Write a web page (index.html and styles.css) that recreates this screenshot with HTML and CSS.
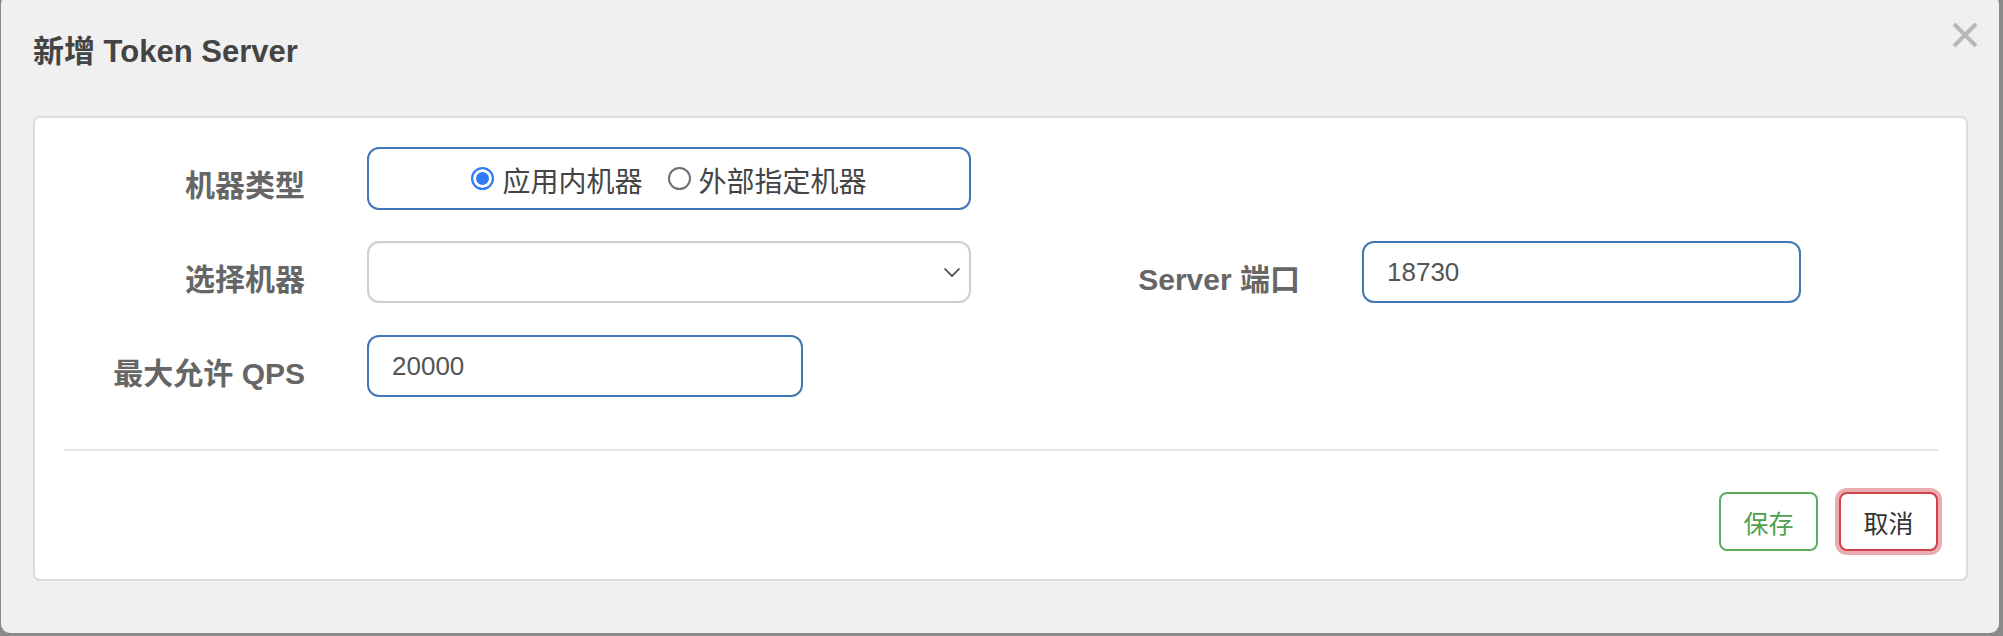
FILE: index.html
```html
<!DOCTYPE html>
<html lang="zh-CN">
<head>
<meta charset="utf-8">
<title>新增 Token Server</title>
<link rel="stylesheet" href="styles.css">
</head>
<body>
<div class="modal">
  <div class="modal-header">
    <h4 class="modal-title">新增 Token Server</h4>
    <span class="close" aria-label="关闭">
      <svg width="26" height="26" viewBox="0 0 26 26"><path d="M2 2 L24 24 M24 2 L2 24" stroke="#b8b8b8" stroke-width="4" stroke-linecap="butt" fill="none"/></svg>
    </span>
  </div>
  <div class="panel">
    <div class="form-grid">
      <label class="control-label">机器类型</label>
      <div class="radio-box">
        <span class="radio checked"></span><span class="radio-text">应用内机器</span>
        <span class="radio"></span><span class="radio-text">外部指定机器</span>
      </div>
      <span></span><span></span>

      <label class="control-label">选择机器</label>
      <div class="select">
        <svg class="chevron" width="18" height="11" viewBox="0 0 18 11"><path d="M1.5 1.5 L9 9 L16.5 1.5" stroke="#444" stroke-width="1.7" fill="none"/></svg>
      </div>
      <label class="control-label">Server 端口</label>
      <div class="input focus">18730</div>

      <label class="control-label">最大允许 QPS</label>
      <div class="input focus narrow">20000</div>
      <span></span><span></span>
    </div>
    <hr class="divider">
    <div class="actions">
      <button class="btn btn-save">保存</button>
      <button class="btn btn-cancel">取消</button>
    </div>
  </div>
</div>
</body>
</html>
```

FILE: styles.css
```css
html, body {
  margin: 0;
  padding: 0;
}
body {
  background: #8a8a8a;
  width: 2003px;
  height: 636px;
  overflow: hidden;
  font-family: "Liberation Sans", "Noto Sans CJK SC", sans-serif;
}
.modal {
  box-sizing: border-box;
  margin: -5px 4px 0 1px;
  width: 1998px;
  height: 638px;
  background: #f0f0f0;
  border-radius: 9px;
  padding: 27px 31px 0 32px;
}
.modal-header {
  display: flex;
  justify-content: space-between;
  align-items: flex-start;
  height: 94px;
}
.modal-title {
  margin: 12px 0 0 0;
  font-size: 31px;
  line-height: 36px;
  font-weight: bold;
  color: #444;
}
.close {
  display: block;
  width: 26px;
  height: 26px;
  margin-right: -10px;
}
.close svg { display: block; }
.panel {
  box-sizing: border-box;
  height: 465px;
  background: #fff;
  border: 2px solid #dcdcdc;
  border-radius: 7px;
  padding: 29px 28px 28px 29px;
}
.form-grid {
  display: grid;
  grid-template-columns: 241px 604px 267px 439px;
  grid-auto-rows: 62px;
  column-gap: 62px;
  row-gap: 32px;
  align-items: center;
}
.control-label {
  text-align: right;
  font-size: 30px;
  font-weight: bold;
  color: #666;
  padding-top: 10px;
  white-space: nowrap;
}
.radio-box, .select, .input {
  box-sizing: border-box;
  height: 62px;
  border-radius: 12px;
  background: #fff;
}
.radio-box {
  height: 63px;
  border: 2px solid #4077b5;
  display: flex;
  justify-content: center;
  align-items: center;
  padding-top: 4px;
  font-size: 28px;
  color: #444;
}
.radio {
  box-sizing: border-box;
  width: 23px;
  height: 23px;
  border-radius: 50%;
  border: 2px solid #6e6e6e;
  background: #fff;
  margin-right: 8px;
  margin-top: -3px;
}
.radio.checked {
  border: 2px solid #2f7bf5;
  background: #2f7bf5;
  box-shadow: inset 0 0 0 3px #fff;
}
.radio-text {
  margin-right: 25px;
  font-family: "Noto Sans CJK SC", sans-serif;
  line-height: 1;
}
.radio-text:last-child { margin-right: 0; }
.select {
  border: 2px solid #cfcfcf;
  box-shadow: inset 0 1px 2px rgba(0,0,0,0.06);
  display: flex;
  justify-content: flex-end;
  align-items: center;
  padding-right: 8px;
}
.chevron { display: block; }
.input {
  border: 2px solid #4077b5;
  display: flex;
  align-items: center;
  padding-left: 23px;
  font-size: 26px;
  color: #555;
}
.input.narrow {
  width: 436px;
}
.divider {
  border: 0;
  height: 2px;
  background: #e6e6e6;
  margin: 52px 0 41px 0;
}
.actions {
  display: flex;
  justify-content: flex-end;
  gap: 21px;
}
.btn {
  box-sizing: border-box;
  width: 99px;
  height: 59px;
  border-radius: 8px;
  background: #fff;
  font-family: "Noto Sans CJK SC", sans-serif;
  font-size: 25px;
  padding: 0;
  cursor: pointer;
}
.btn-save {
  border: 2px solid #5cae5c;
  color: #4fa14f;
}
.btn-cancel {
  border: 2px solid #d0434a;
  color: #333;
  box-shadow: 0 0 0 4px rgba(214, 90, 100, 0.5);
}
```
